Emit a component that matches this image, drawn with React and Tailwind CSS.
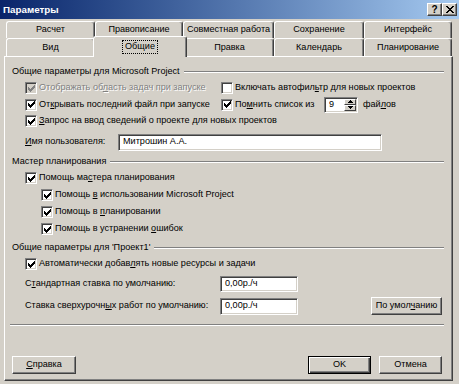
import React from 'react';

const tabsBack = [
  { label: 'Расчет', w: 'w-[89px]' },
  { label: 'Правописание', w: 'w-[88px]' },
  { label: 'Совместная работа', w: 'w-[91px]' },
  { label: 'Сохранение', w: 'w-[90px]' },
  { label: 'Интерфейс', w: 'w-[88px]' },
];

function CheckMark({ color }) {
  // classic 7x7 pixel tick
  const cols = [2, 3, 4, 3, 2, 1, 0];
  return (
    <svg width="7" height="7" viewBox="0 0 7 7" shapeRendering="crispEdges">
      {cols.map((y, x) => (
        <rect key={x} x={x} y={y} width="1" height="3" fill={color} />
      ))}
    </svg>
  );
}

function Check({ disabled = false }) {
  return (
    <span
      className={`w-[12px] h-[12px] shrink-0 flex items-center justify-center border border-t-[#808080] border-l-[#808080] border-b-white border-r-white shadow-[inset_1px_1px_0_#404040,inset_-1px_-1px_0_#d4d0c8] ${
        disabled ? 'bg-[#d4d0c8]' : 'bg-white'
      }`}
    >
      {!disabled && <CheckMark color="#000" />}
      {disabled && <CheckMark color="#808080" />}
    </span>
  );
}

function EmptyCheck() {
  return (
    <span className="w-[12px] h-[12px] shrink-0 bg-white border border-t-[#808080] border-l-[#808080] border-b-white border-r-white shadow-[inset_1px_1px_0_#404040,inset_-1px_-1px_0_#d4d0c8]" />
  );
}

function Field({ className, children }) {
  return (
    <div
      className={`bg-white shrink-0 flex items-center pl-[4px] whitespace-nowrap border border-t-[#808080] border-l-[#808080] border-b-white border-r-white shadow-[inset_1px_1px_0_#404040,inset_-1px_-1px_0_#d4d0c8] ${className}`}
    >
      {children}
    </div>
  );
}

function Btn({ className, children, isDefault }) {
  if (isDefault) {
    return (
      <div
        className={`h-[18px] shrink-0 whitespace-nowrap flex items-center justify-center border border-black shadow-[inset_1px_1px_0_#fff,inset_-1px_-1px_0_#404040,inset_-2px_-2px_0_#808080] ${className}`}
      >
        {children}
      </div>
    );
  }
  return (
    <div
      className={`h-[18px] shrink-0 whitespace-nowrap flex items-center justify-center border border-t-white border-l-white border-r-[#404040] border-b-[#404040] shadow-[inset_-1px_-1px_0_#808080] ${className}`}
    >
      {children}
    </div>
  );
}

function Group({ children }) {
  return (
    <div className="h-[16px] flex items-center">
      <span className="whitespace-nowrap">{children}</span>
      <div className="flex-1 ml-[4px] h-[2px] border-t border-t-[#808080] border-b border-b-white" />
    </div>
  );
}

function Tab({ w, children }) {
  return (
    <div
      className={`${w} h-full shrink-0 flex items-center justify-center border-t border-l border-t-white border-l-white border-r border-r-[#404040] shadow-[inset_-1px_0_0_#808080] rounded-t-[3px] whitespace-nowrap`}
    >
      {children}
    </div>
  );
}

function TitleBtn({ children }) {
  return (
    <div className="w-[15px] h-[13px] flex items-center justify-center bg-[#d4d0c8] border border-t-white border-l-white border-r-[#404040] border-b-[#404040] shadow-[inset_-1px_-1px_0_#808080]">
      {children}
    </div>
  );
}

export default function App() {
  return (
    <div className="w-[459px] h-[384px] bg-[#d4d0c8] font-['Liberation_Sans',Arial,sans-serif] text-[9.1px] text-black overflow-hidden flex flex-col select-none leading-none">
      {/* title bar */}
      <div className="h-[19px] shrink-0 bg-linear-to-r from-[#0a246a] to-[#a6caf0] flex items-center justify-between pl-[3px] pr-[2px]">
        <span className="text-white font-bold text-[9.8px]">Параметры</span>
        <div className="flex">
          <TitleBtn>
            <span className="font-bold text-[10px]">?</span>
          </TitleBtn>
          <TitleBtn>
            <svg width="8" height="7" viewBox="0 0 8 7" shapeRendering="crispEdges">
              <path d="M0 0h2v1h-2zM6 0h2v1h-2zM1 1h2v1h-2zM5 1h2v1h-2zM2 2h4v1h-4zM3 3h2v1h-2zM2 4h4v1h-4zM1 5h2v1h-2zM5 5h2v1h-2zM0 6h2v1h-2zM6 6h2v1h-2z" fill="#000" />
            </svg>
          </TitleBtn>
        </div>
      </div>

      {/* tabs */}
      <div className="pt-[2px] pl-[6px] flex flex-col shrink-0">
        <div className="flex h-[17px]">
          {tabsBack.map((t) => (
            <Tab key={t.label} w={t.w}>
              {t.label}
            </Tab>
          ))}
        </div>
        <div className="flex h-[18px]">
          <Tab w="w-[89px]">Вид</Tab>
          <div className="relative z-10 shrink-0 w-[94px] -mx-[2px] h-[21px] -mt-[2px] bg-[#d4d0c8] flex items-center justify-center border-t border-l border-t-white border-l-white border-r border-r-[#404040] shadow-[inset_-1px_0_0_#808080] rounded-t-[3px]">
            <span className="border border-dotted border-black px-[2px] py-[1px]">Общие</span>
          </div>
          <Tab w="w-[89px]">Правка</Tab>
          <Tab w="w-[90px]">Календарь</Tab>
          <Tab w="w-[88px]">Планирование</Tab>
        </div>
      </div>

      {/* panel */}
      <div className="ml-[4px] w-[449px] h-[325px] shrink-0 border-t border-l border-t-white border-l-white border-r border-b border-r-[#404040] border-b-[#404040] shadow-[inset_-1px_-1px_0_#808080] flex flex-col pl-[7px] pr-[8px] pt-[7px] whitespace-nowrap">
        <Group>Общие параметры для Microsoft Project</Group>

        <div className="h-[16px] flex items-center">
          <div className="w-[209px] shrink-0 pl-[13px] flex items-center gap-[2px]">
            <Check disabled />
            <span className="text-[#808080] [text-shadow:1px_1px_0_#fff]">
              Отображать об<u>л</u>асть задач при запуске
            </span>
          </div>
          <div className="flex items-center gap-[2px]">
            <EmptyCheck />
            <span>
              Включать автофил<u>ь</u>тр для новых проектов
            </span>
          </div>
        </div>

        <div className="h-[17px] flex items-center">
          <div className="w-[209px] shrink-0 pl-[13px] flex items-center gap-[2px]">
            <Check />
            <span>
              От<u>к</u>рывать последний файл при запуске
            </span>
          </div>
          <div className="flex items-center gap-[2px] shrink-0">
            <Check />
            <span className="w-[89px] shrink-0">
              По<u>м</u>нить список из
            </span>
          </div>
          <div className="w-[34px] h-[16px] shrink-0 flex bg-white border border-t-[#808080] border-l-[#808080] border-b-white border-r-white shadow-[inset_1px_1px_0_#404040,inset_-1px_-1px_0_#d4d0c8]">
            <span className="flex-1 flex items-center pl-[4px]">9</span>
            <div className="w-[13px] flex flex-col p-[1px] pl-0">
              <div className="flex-1 bg-[#d4d0c8] border border-t-white border-l-white border-r-[#404040] border-b-[#404040] flex items-center justify-center">
                <svg width="5" height="3" viewBox="0 0 5 3" shapeRendering="crispEdges">
                  <path d="M2 0h1v1h-1zM1 1h3v1h-3zM0 2h5v1h-5z" fill="#000" />
                </svg>
              </div>
              <div className="flex-1 bg-[#d4d0c8] border border-t-white border-l-white border-r-[#404040] border-b-[#404040] flex items-center justify-center">
                <svg width="5" height="3" viewBox="0 0 5 3" shapeRendering="crispEdges">
                  <path d="M0 0h5v1h-5zM1 1h3v1h-3zM2 2h1v1h-1z" fill="#000" />
                </svg>
              </div>
            </div>
          </div>
          <span className="ml-[5px]">
            фай<u>л</u>ов
          </span>
        </div>

        <div className="h-[16px] pl-[13px] flex items-center gap-[2px]">
          <Check />
          <span>
            <u>З</u>апрос на ввод сведений о проекте для новых проектов
          </span>
        </div>

        <div className="mt-[4px] h-[18px] pl-[13px] flex items-center">
          <span className="w-[93px] shrink-0">
            <u>И</u>мя пользователя:
          </span>
          <Field className="w-[264px] h-[17px]">Митрошин А.А.</Field>
        </div>

        <div className="mt-[3px]">
          <Group>Мастер планирования</Group>
        </div>
        <div className="h-[16px] pl-[13px] flex items-center gap-[2px]">
          <Check />
          <span>
            Помощь ма<u>с</u>тера планирования
          </span>
        </div>
        <div className="mt-[1px] h-[16px] pl-[29px] flex items-center gap-[2px]">
          <Check />
          <span>
            Помощь <u>в</u> использовании Microsoft Project
          </span>
        </div>
        <div className="mt-[1px] h-[16px] pl-[29px] flex items-center gap-[2px]">
          <Check />
          <span>
            Помощь в <u>п</u>ланировании
          </span>
        </div>
        <div className="mt-[1px] h-[16px] pl-[29px] flex items-center gap-[2px]">
          <Check />
          <span>
            Помощь в устранении <u>о</u>шибок
          </span>
        </div>

        <div className="mt-[3px]">
          <Group>Общие параметры для 'Проект1'</Group>
        </div>
        <div className="h-[16px] pl-[13px] flex items-center gap-[2px]">
          <Check />
          <span>
            Автоматически добав<u>л</u>ять новые ресурсы и задачи
          </span>
        </div>

        <div className="mt-[3px] h-[18px] pl-[13px] flex items-center">
          <span className="w-[195px] shrink-0">
            С<u>т</u>андартная ставка по умолчанию:
          </span>
          <Field className="w-[78px] h-[16px]">0,00р./ч</Field>
        </div>
        <div className="mt-[4px] h-[18px] pl-[13px] flex items-center">
          <span className="w-[195px] shrink-0">
            Ставка сверхурочн<u>ы</u>х работ по умолчанию:
          </span>
          <Field className="w-[78px] h-[17px]">0,00р./ч</Field>
          <Btn className="ml-auto mr-[2px] w-[71px]">
            <span>
              По умол<u>ч</u>анию
            </span>
          </Btn>
        </div>

        <div className="mt-[9px] -ml-[2px] h-[2px] border-t border-t-[#808080] border-b border-b-white" />

        <div className="mt-[30px] flex items-center">
          <Btn className="w-[64px]">
            <span>
              <u>С</u>правка
            </span>
          </Btn>
          <Btn isDefault className="ml-auto w-[63px]">
            OK
          </Btn>
          <Btn className="ml-[8px] mr-[2px] w-[63px]">Отмена</Btn>
        </div>
      </div>
    </div>
  );
}
